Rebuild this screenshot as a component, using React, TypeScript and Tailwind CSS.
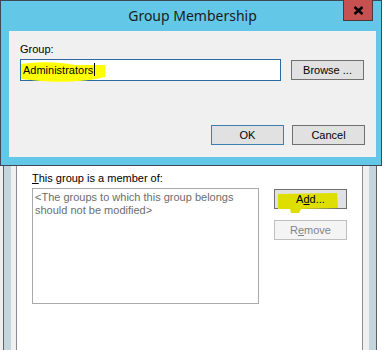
import React from 'react';

const uiFont = { fontFamily: '"Liberation Sans", Arial, sans-serif' };

function WinButton({
  children,
  variant = 'normal',
  className = '',
}: {
  children: React.ReactNode;
  variant?: 'normal' | 'default' | 'disabled';
  className?: string;
}) {
  const look =
    variant === 'default'
      ? 'border-[#3c7fb1] bg-[#e1e1e1] text-black'
      : variant === 'disabled'
        ? 'border-[#bfbfbf] bg-[#f4f4f4] text-[#838383]'
        : 'border-[#707070] bg-[#e1e1e1] text-black';
  return (
    <div
      className={`relative flex h-[20px] w-[73px] items-center justify-center border text-[11px] ${look} ${className}`}
    >
      {children}
    </div>
  );
}

function BackgroundWindow() {
  return (
    <div className="flex h-[350px] w-[385px]">
      {/* left frame */}
      <div className="w-[3px] bg-[#eeeeee]" />
      <div className="w-px bg-[#5f5f6f]" />
      <div className="w-[7px] bg-[#c4d5dc]" />
      <div className="w-[5px] bg-[#f0f0f0]" />
      <div className="w-px bg-[#8a8a98]" />

      {/* content */}
      <div className="flex-1 bg-white pl-[15px] pt-[172px]">
        <div className="text-[11px] leading-[13px] text-black">
          <span className="underline">T</span>his group is a member of:
        </div>
        <div className="mt-[3px] flex gap-[15px]">
          <div className="h-[116px] w-[227px] border border-[#a9a9a9] px-[2px] pt-[2px] text-[11px] leading-[13px] text-[#6d6d6d]">
            &lt;The groups to which this group belongs
            <br />
            should not be modified&gt;
          </div>
          <div className="flex flex-col gap-[11px] pt-px">
            <WinButton>
              <svg
                className="absolute left-[2px] top-[2px]"
                width="62"
                height="22"
                viewBox="0 0 62 22"
              >
                <path
                  d="M1 2 L60 1 L61 16 L24 17 L22 21 L14 21 L13 17 L1 17 Z"
                  fill="#dede00"
                />
              </svg>
              <span className="relative">
                A<span className="underline">d</span>d...
              </span>
            </WinButton>
            <WinButton variant="disabled">
              <span>
                R<span className="underline">e</span>move
              </span>
            </WinButton>
          </div>
        </div>
      </div>

      {/* right frame */}
      <div className="w-px bg-[#8a8a98]" />
      <div className="w-[6px] bg-[#f0f0f0]" />
      <div className="w-[7px] bg-[#c4d5dc]" />
      <div className="w-px bg-[#5f5f6f]" />
      <div className="w-[8px] bg-white" />
    </div>
  );
}

function GroupMembershipDialog() {
  return (
    <div className="absolute left-0 top-0 flex h-[166px] w-[382px] flex-col border border-[#3d4a55] bg-[#63c8e8] pb-[8px] pl-[8px] pr-[5px]">
      {/* title bar */}
      <div className="relative flex h-[30px] items-center justify-center pb-[2px]">
        <span
          className="text-[14px] text-[#1b1b1b]"
          style={{ fontFamily: '"Noto Sans", "Open Sans", sans-serif' }}
        >
          Group Membership
        </span>
        <div className="absolute right-[3px] top-[-1px] flex h-[21px] w-[30px] items-center justify-center border border-[#4a3a3a] border-t-0 bg-[#c75050]">
          <svg width="11" height="9" viewBox="0 0 11 9">
            <path d="M1.5 1 L9.5 8 M9.5 1 L1.5 8" stroke="#000" strokeWidth="2.4" />
          </svg>
        </div>
      </div>

      {/* body */}
      <div className="flex-1 bg-[#f0f0f0] pl-[11px] pr-[11px] pt-[12px]">
        <div className="text-[11px] leading-[13px] text-black">Group:</div>
        <div className="mt-[3px] flex items-center gap-[10px]">
          <div className="relative flex h-[22px] w-[261px] items-center border border-[#2a6aa0] bg-white px-[2px]">
            <svg
              className="absolute left-0 top-[1px]"
              width="86"
              height="22"
              viewBox="0 0 86 22"
            >
              <path
                d="M0 3 C20 0 40 1 54 4 L84 4 L84 16 C70 20 40 22 20 20 L0 18 Z"
                fill="#ffff00"
              />
            </svg>
            <span className="relative text-[11px] text-black">
              Administrators
              <span className="ml-px inline-block h-[13px] w-px translate-y-[2px] bg-black" />
            </span>
          </div>
          <WinButton className="w-[72px]">Browse ...</WinButton>
        </div>
        <div className="mt-[44px] flex justify-end gap-[8px]">
          <WinButton variant="default">OK</WinButton>
          <WinButton className="w-[72px]">Cancel</WinButton>
        </div>
      </div>
    </div>
  );
}

export default function App() {
  return (
    <div className="relative h-[350px] w-[385px] overflow-hidden bg-white" style={uiFont}>
      <BackgroundWindow />
      <GroupMembershipDialog />
    </div>
  );
}
